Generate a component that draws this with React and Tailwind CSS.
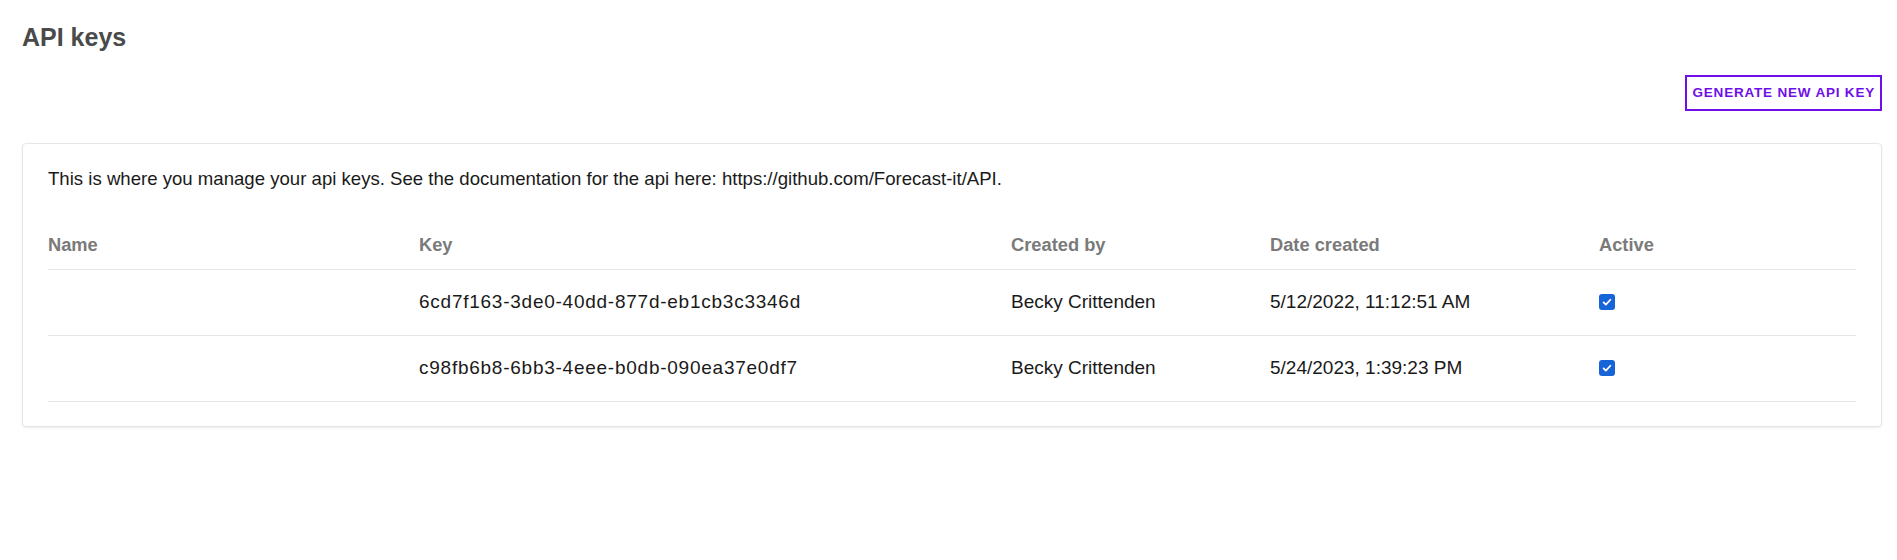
import React from 'react'

const keys = [
  { name: '', key: '6cd7f163-3de0-40dd-877d-eb1cb3c3346d', by: 'Becky Crittenden', date: '5/12/2022, 11:12:51 AM', active: true },
  { name: '', key: 'c98fb6b8-6bb3-4eee-b0db-090ea37e0df7', by: 'Becky Crittenden', date: '5/24/2023, 1:39:23 PM', active: true },
]

const cols = 'grid grid-cols-[371px_592px_259px_329px_1fr]'

export default function App() {
  return (
    <div className="min-h-screen bg-white pl-[22px] pr-[15px] pt-[25px] font-['Liberation_Sans',Arial,sans-serif]">
      <h1 className="text-[25px] leading-[24px] font-bold text-[#4a4a4a]">API keys</h1>
      <div className="mt-[26px] flex justify-end">
        <button className="h-[36px] px-[5px] border-2 border-[#6e0fea] text-[#6e0fea] text-[13.5px] font-bold tracking-[0.8px] uppercase">
          Generate new api key
        </button>
      </div>
      <section className="mt-[32px] rounded-[4px] border border-[#e6e6e6] shadow-[0_1px_2px_rgba(0,0,0,0.08)] px-[25px] pt-[21px] pb-[24px]">
        <p className="text-[18.6px] leading-[27px] text-[#1a1a1a]">
          This is where you manage your api keys. See the documentation for the api here: https://github.com/Forecast-it/API.
        </p>
        <div className={`${cols} mt-[41px] pb-[12px] border-b border-[#e6e6e6] text-[18.3px] leading-[24px] font-bold text-[#7a7a7a]`}>
          <div>Name</div>
          <div>Key</div>
          <div>Created by</div>
          <div>Date created</div>
          <div>Active</div>
        </div>
        {keys.map(k => (
          <div key={k.key} className={`${cols} h-[66px] items-center border-b border-[#e6e6e6] text-[19px] text-[#1a1a1a]`}>
            <div>{k.name}</div>
            <div className="tracking-[0.75px]">{k.key}</div>
            <div>{k.by}</div>
            <div>{k.date}</div>
            <div>
              <Check on={k.active} />
            </div>
          </div>
        ))}
      </section>
    </div>
  )
}

function Check({ on }) {
  return (
    <span className={`mb-[2px] flex h-4 w-4 items-center justify-center rounded-[3px] ${on ? 'bg-[#1763d8]' : 'border border-gray-400'}`}>
      {on && (
        <svg viewBox="0 0 16 16" className="h-[12px] w-[12px]" fill="none" stroke="white" strokeWidth="2.4" strokeLinecap="round" strokeLinejoin="round">
          <path d="M3.5 8.5l3 3 6-6.5" />
        </svg>
      )}
    </span>
  )
}
